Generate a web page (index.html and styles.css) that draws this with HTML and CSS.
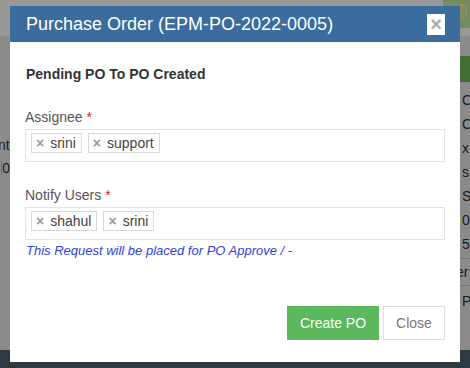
FILE: index.html
```html
<!DOCTYPE html>
<html>
<head>
<meta charset="utf-8">
<link rel="stylesheet" href="styles.css">
</head>
<body>
<div class="page">
  <div class="topbar">
    <div class="top-tile">
      <svg width="14" height="15" viewBox="0 0 14 15"><rect x="2" y="2.5" width="10" height="11" rx="1" fill="none" stroke="#9a8a5c" stroke-width="1.5"/><rect x="4.5" y="1" width="5" height="3" rx="0.8" fill="#9a8a5c"/><line x1="4.5" y1="7.5" x2="9.5" y2="7.5" stroke="#9a8a5c" stroke-width="1.2"/><line x1="4.5" y1="10" x2="9.5" y2="10" stroke="#9a8a5c" stroke-width="1.2"/></svg>
    </div>
  </div>
  <div class="main">
    <div class="left-col">
      <div class="lt lt-nt">nt</div>
      <div class="lt lt-zero"><span class="teal"></span>0</div>
    </div>
    <div class="right-col">
      <div class="green-strip"></div>
      <div class="rt">C</div>
      <div class="rt">C</div>
      <div class="rt">x</div>
      <div class="rt">s</div>
      <div class="rt">S</div>
      <div class="rt">0</div>
      <div class="rt">5</div>
      <div class="rt-sep"></div>
      <div class="rt rt-er">er</div>
      <div class="rt-sep"></div>
      <div class="rt rt-p">P</div>
    </div>
  </div>
  <div class="footer"></div>
</div>

<div class="modal">
  <div class="modal-header">
    <h3 class="modal-title">Purchase Order (EPM-PO-2022-0005)</h3>
    <button class="close-x">×</button>
  </div>
  <div class="modal-body">
    <h4 class="section-title">Pending PO To PO Created</h4>
    <div class="field">
      <label class="label">Assignee <span class="req">*</span></label>
      <div class="tag-input">
        <span class="tag"><span class="tag-x">×</span>srini</span>
        <span class="tag"><span class="tag-x">×</span>support</span>
      </div>
    </div>
    <div class="field">
      <label class="label">Notify Users <span class="req">*</span></label>
      <div class="tag-input">
        <span class="tag"><span class="tag-x">×</span>shahul</span>
        <span class="tag"><span class="tag-x">×</span>srini</span>
      </div>
      <div class="help">This Request will be placed for PO Approve / -</div>
    </div>
  </div>
  <div class="modal-footer">
    <button class="btn btn-success">Create PO</button>
    <button class="btn btn-default">Close</button>
  </div>
</div>
</body>
</html>
```

FILE: styles.css
```css
* { box-sizing: border-box; }
html, body {
  margin: 0;
  padding: 0;
  width: 470px;
  height: 368px;
  overflow: hidden;
  font-family: "Liberation Sans", Arial, sans-serif;
}
body { background: #8b8b8b; position: relative; }

.page {
  display: grid;
  grid-template-rows: 36px 314px 18px;
  height: 368px;
}
.topbar {
  background: #989898;
  display: flex;
  justify-content: flex-end;
  align-items: flex-start;
}
.top-tile {
  width: 27px;
  height: 28px;
  background: #748c62;
  display: flex;
  justify-content: flex-end;
  padding: 3px 2px 0 0;
}
.main {
  display: flex;
  justify-content: space-between;
}
.left-col {
  width: 10px;
  padding-top: 100px;
  overflow: hidden;
}
.lt { font-size: 14px; color: #1e1e1e; line-height: 18px; white-space: nowrap; }
.lt-nt { margin-left: -2px; }
.lt-zero { margin-top: 5px; display: flex; align-items: center; padding-left: 1px; }
.teal { display: inline-block; width: 3px; height: 12px; background: #4a7f82; margin-right: 1px; }

.right-col {
  width: 10px;
  padding-top: 20px;
  overflow: hidden;
}
.green-strip { height: 26px; background: #416f33; margin-bottom: 6px; }
.rt {
  font-size: 14px;
  color: #1f1a12;
  line-height: 24px;
  padding-left: 2px;
  white-space: nowrap;
}
.rt-sep { height: 1px; background: #777; margin: 2px 0; }
.rt-er { margin-left: -6px; line-height: 22px; }
.rt-p { line-height: 26px; }

.footer { background: #2e3a41; }

.modal {
  position: absolute;
  left: 10px;
  top: 6px;
  width: 450px;
  height: 356px;
  background: #fff;
  display: flex;
  flex-direction: column;
}
.modal-header {
  height: 36px;
  background: #3a6d9e;
  display: flex;
  align-items: center;
  justify-content: space-between;
  padding: 0 15px 0 16px;
}
.modal-title {
  margin: 0;
  font-size: 18px;
  font-weight: normal;
  color: #fff;
  line-height: 20px;
}
.close-x {
  width: 18px;
  height: 21px;
  border: 0;
  padding: 0;
  background: #fff;
  color: #aaa;
  font-size: 20px;
  font-weight: bold;
  line-height: 21px;
  font-family: "Liberation Sans", Arial, sans-serif;
  margin-top: 1px;
}
.modal-body {
  padding: 23px 15px 0 15px;
  flex: 1;
}
.section-title {
  margin: 0 0 0 1px;
  font-size: 14px;
  font-weight: bold;
  color: #333;
  line-height: 18px;
}
.field { margin-top: 24px; }
.field + .field { margin-top: 23px; }
.label {
  display: block;
  font-size: 14px;
  color: #555;
  line-height: 20px;
  margin-bottom: 2px;
}
.req { color: #e02020; }
.tag-input {
  height: 33px;
  border: 1px solid #e3e3e3;
  padding: 3px 5px;
  display: flex;
  gap: 6px;
  align-items: flex-start;
}
.tag {
  display: inline-flex;
  align-items: center;
  height: 20px;
  border: 1px solid #dadada;
  background: #fff;
  padding: 0 5px 0 4px;
  font-size: 14px;
  color: #444;
  line-height: 18px;
}
.tag-x {
  color: #999;
  font-weight: bold;
  font-size: 14px;
  margin-right: 6px;
}
.help {
  margin-top: 3px;
  margin-left: 1px;
  font-size: 13px;
  font-style: italic;
  color: #3340dd;
  line-height: 16px;
}
.modal-footer {
  display: flex;
  justify-content: flex-end;
  gap: 4px;
  padding: 0 15px 22px 15px;
}
.btn {
  height: 34px;
  font-size: 14px;
  font-family: "Liberation Sans", Arial, sans-serif;
  padding: 0;
  border: 1px solid transparent;
  border-radius: 0;
  line-height: 32px;
  white-space: nowrap;
  text-align: center;
}
.btn-success { background: #5cb85c; color: #fff; width: 92px; }
.btn-default { background: #fff; border-color: #dddddd; color: #777; width: 62px; }
```
